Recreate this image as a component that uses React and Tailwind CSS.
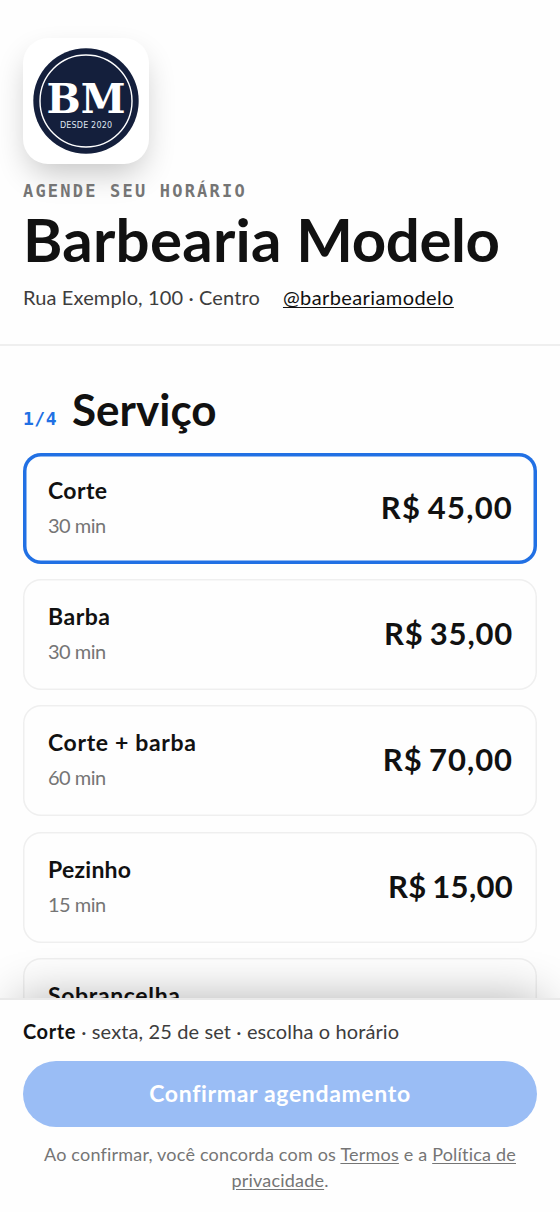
import React, { useState } from "react";

const services = [
  { name: "Corte", duration: "30 min", price: "R$ 45,00", nameCls: "tracking-[0.4px]", priceCls: "tracking-[1.2px]" },
  { name: "Barba", duration: "30 min", price: "R$ 35,00", nameCls: "tracking-[0.5px]", priceCls: "tracking-[0.8px]" },
  { name: "Corte + barba", duration: "60 min", price: "R$ 70,00", nameCls: "tracking-[0.65px]", priceCls: "tracking-[0.95px]" },
  { name: "Pezinho", duration: "15 min", price: "R$ 15,00", nameCls: "tracking-[0.25px]", priceCls: "tracking-[0.3px]" },
  { name: "Sobrancelha", nameCls: "tracking-[0.65px]" },
];

function Logo() {
  return (
    <svg viewBox="0 0 106 106" className="size-[106px]">
      <circle cx="53" cy="53" r="52.7" fill="#141f3c" />
      <circle cx="53" cy="53" r="46" fill="none" stroke="#fff" strokeWidth="1.4" />
      <text x="53" y="64.5" textAnchor="middle" fill="#fff" fontFamily="DejaVu Serif" fontWeight="700" fontSize="40.5">BM</text>
      <text x="53" y="80.3" textAnchor="middle" textLength="52" fill="#dfe5f0" fontFamily="DejaVu Sans" fontSize="8">DESDE 2020</text>
    </svg>
  );
}

export default function App() {
  const [selected, setSelected] = useState("Corte");

  return (
    <div className="flex h-[1212px] w-full flex-col overflow-hidden bg-[#fefefe] font-['Lato',sans-serif] text-[#111] [font-variant-ligatures:none]">
      <div className="min-h-0 flex-1 overflow-hidden">
        {/* Header */}
        <header className="flex h-[346px] flex-col items-start border-b-2 border-[#efefef] px-[23px] pt-[38px]">
          <div className="flex size-[126px] items-center justify-center rounded-[25px] bg-white shadow-[0_14px_32px_-6px_rgba(0,0,0,0.24)]">
            <Logo />
          </div>
          <p className="mt-4 font-['DejaVu_Sans_Mono',monospace] text-[17px] leading-[22px] font-bold tracking-[2.2px] whitespace-nowrap text-[#757575]">
            AGENDE SEU HORÁRIO
          </p>
          <h1 className="mt-[2px] text-[60px] leading-[70px] font-bold whitespace-nowrap">
            <span className="tracking-[0.25px]">Barbearia</span> <span className="tracking-[-0.4px]">Modelo</span>
          </h1>
          <div className="mt-[10px] flex gap-[23px] text-[20px] leading-[26px] whitespace-nowrap text-[#3d3d3d]">
            <span className="tracking-[0.13px]">Rua Exemplo, 100 · Centro</span>
            <a href="#" className="tracking-[0.4px] text-[#111] underline decoration-1 underline-offset-2">@barbeariamodelo</a>
          </div>
        </header>

        {/* Services */}
        <section className="px-[23px] pt-[36px]">
          <div className="flex items-baseline gap-[15px]">
            <span className="relative -top-px font-['DejaVu_Sans_Mono',monospace] text-[18px] font-bold tracking-[0.5px] text-[#2170e4]">1/4</span>
            <h2 className="text-[44px] leading-[54px] font-bold">Serviço</h2>
          </div>
          <div className="mt-[16.5px] flex flex-col gap-[15.4px]">
            {services.map((s) => (
              <button
                key={s.name}
                onClick={() => setSelected(s.name)}
                className={`flex h-[111px] items-start justify-between rounded-[18px] bg-[#fefefe] pr-[24px] pl-[25px] text-left ${
                  selected === s.name
                    ? "shadow-[inset_0_0_0_3.5px_#2170e4]"
                    : "shadow-[inset_0_0_0_1.5px_#efefef]"
                }`}
              >
                <span className="mt-[23px] flex flex-col gap-[8px]">
                  <span className={`text-[23px] leading-[28px] font-bold ${s.nameCls}`}>{s.name}</span>
                  {s.duration && <span className="text-[20px] leading-[26px] tracking-[-0.5px] text-[#757575]">{s.duration}</span>}
                </span>
                {s.price && <span className={`mt-[35px] text-[31px] leading-[38px] font-bold [word-spacing:-2px] ${s.priceCls}`}>{s.price}</span>}
              </button>
            ))}
          </div>
        </section>
      </div>

      {/* Confirmation bar */}
      <footer className="relative z-10 flex h-[214px] shrink-0 flex-col border-t-2 border-[#e9e9e9] bg-[#fefefe] px-[23px] pt-[17px] shadow-[0_-16px_46px_-18px_rgba(0,0,0,0.32)]">
        <p className="text-[20px] leading-[28px] tracking-[0.12px] whitespace-nowrap text-[#3d3d3d]">
          <strong className="tracking-[0.6px] text-[#111]">Corte</strong> · sexta, 25 de set · escolha o horário
        </p>
        <button className="mt-4 h-[66px] w-full rounded-full bg-[#9abdf5] pb-0.5 text-[23px] font-bold tracking-[0.65px] text-white">
          Confirmar agendamento
        </button>
        <p className="mt-[14px] text-center text-[18px] leading-[26px] tracking-[0.2px] text-[#757575]">
          Ao confirmar, você concorda com os <a href="#" className="underline underline-offset-2">Termos</a> e a{" "}
          <a href="#" className="underline underline-offset-2">Política de<br />privacidade</a>.
        </p>
      </footer>
    </div>
  );
}
